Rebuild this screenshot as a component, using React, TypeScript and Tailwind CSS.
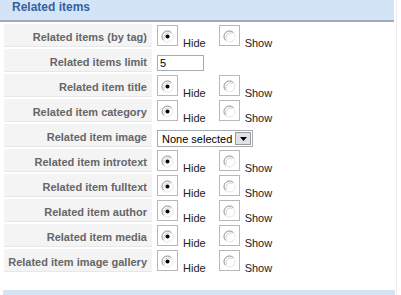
import React from 'react';

const font = { fontFamily: '"Liberation Sans", Arial, sans-serif' };

function Radio({ checked = false }: { checked?: boolean }) {
  return (
    <span className="relative block w-[21px] h-[21px] mt-[1px] border border-[#b8b8b8] bg-white shrink-0">
      <svg className="absolute left-[3px] top-[4px]" width="13" height="13" viewBox="0 0 13 13">
        {/* lower-right half, very light */}
        <path d="M10.4 2.6 A5.5 5.5 0 0 1 2.6 10.4" fill="none" stroke="#e6e6e6" strokeWidth="1" />
        {/* upper-left half, dark */}
        <path d="M2.6 10.4 A5.5 5.5 0 0 1 10.4 2.6" fill="none" stroke="#8c8c8c" strokeWidth="1" />
        <path d="M3.4 9.2 A4.3 4.3 0 0 1 9.2 3.4" fill="none" stroke="#d0d0d0" strokeWidth="1" />
        {checked && <circle cx="6.5" cy="6.5" r="2" fill="#000" />}
      </svg>
    </span>
  );
}

function HideShow() {
  return (
    <div className="flex items-start">
      <Radio checked />
      <span className="ml-[5px] mt-[12px] text-[11px] leading-[14px] text-[#222]">Hide</span>
      <span className="ml-[13px]">
        <Radio />
      </span>
      <span className="ml-[5px] mt-[12px] text-[11px] leading-[14px] text-[#222]">Show</span>
    </div>
  );
}

function Row({ label, children }: { label: string; children: React.ReactNode }) {
  return (
    <div className="flex h-[23px]">
      <div className="ml-[4px] w-[148px] shrink-0 bg-[#f4f4f4] border-b border-[#e8e8e8] pr-[5px] pt-[6px] text-right text-[11px] leading-[14px] font-bold text-[#666] whitespace-nowrap">
        {label}
      </div>
      <div className="ml-[3px] pl-[2px]">{children}</div>
    </div>
  );
}

export default function App() {
  const radios = [
    'Related items (by tag)',
  ];
  return (
    <div className="w-[401px] h-[295px] overflow-hidden bg-white" style={font}>
      <div className="w-[397px] border-r border-[#ececec] h-[295px] flex flex-col">
        <div className="w-[394px] h-[22px] bg-[#d4e4f7] border-b-2 border-[#9caabb] pl-[12px] text-[12px] leading-[14px] font-bold text-[#34609e]">
          Related items
        </div>
        <div className="flex flex-col gap-[2px] pt-[2px]">
          {radios.map((r) => (
            <Row key={r} label={r}>
              <HideShow />
            </Row>
          ))}
          <Row label="Related items limit">
            <input
              readOnly
              value="5"
              className="block mt-[6px] w-[47px] h-[16px] border border-[#a5acb2] px-[2px] text-[11px] leading-[14px] text-black outline-none"
              style={font}
            />
          </Row>
          <Row label="Related item title">
            <HideShow />
          </Row>
          <Row label="Related item category">
            <HideShow />
          </Row>
          <Row label="Related item image">
            <div className="mt-[6px] flex items-center w-[96px] h-[17px] border border-[#a5acb2] bg-white">
              <span className="pl-[4px] text-[11px] leading-[14px] text-black flex-1 whitespace-nowrap">None selected</span>
              <span className="mr-[1px] flex items-center justify-center w-[16px] h-[13px] bg-[#e2e2e2] border border-[#9a9a9a]">
                <svg width="7" height="4" viewBox="0 0 7 4">
                  <path d="M0 0 H7 L3.5 4 Z" fill="#000" />
                </svg>
              </span>
            </div>
          </Row>
          <Row label="Related item introtext">
            <HideShow />
          </Row>
          <Row label="Related item fulltext">
            <HideShow />
          </Row>
          <Row label="Related item author">
            <HideShow />
          </Row>
          <Row label="Related item media">
            <HideShow />
          </Row>
          <Row label="Related item image gallery">
            <HideShow />
          </Row>
        </div>
        <div className="mt-auto ml-[3px] w-[392px] h-[5px] bg-[#d4e4f7]" />
      </div>
    </div>
  );
}
